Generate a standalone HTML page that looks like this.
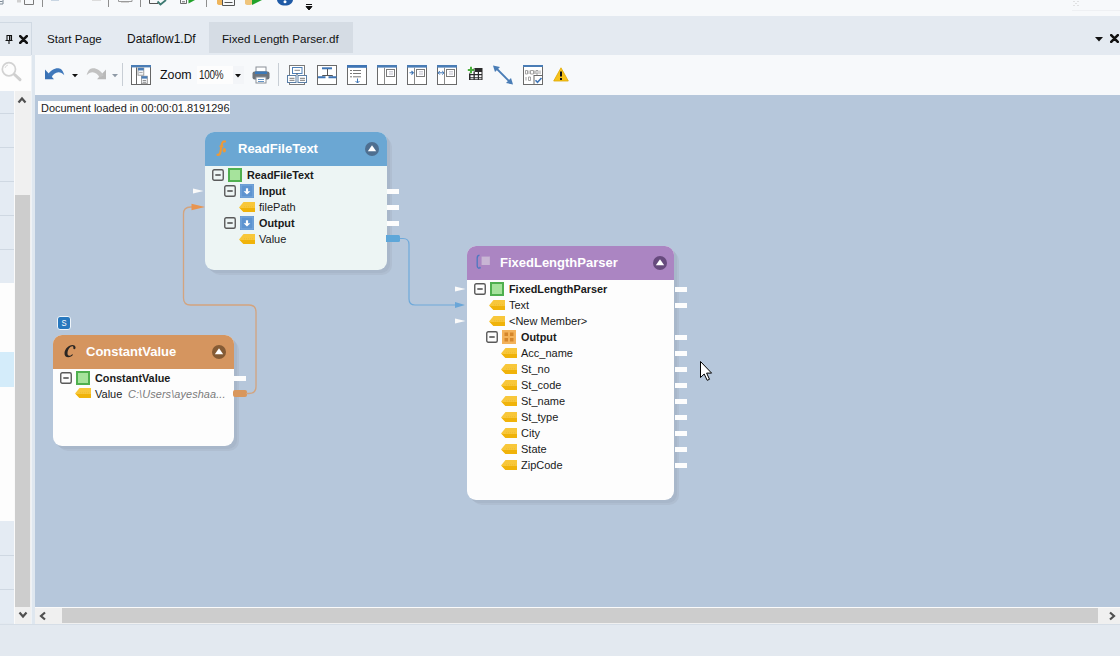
<!DOCTYPE html>
<html><head><meta charset="utf-8">
<style>
*{box-sizing:border-box;margin:0;padding:0}
html,body{width:1120px;height:656px;overflow:hidden}
body{position:relative;background:#e3e9f0;font-family:"Liberation Sans",sans-serif;color:#1e1e1e}
.a{position:absolute}
#top{left:0;top:0;width:1120px;height:16px;background:#f7f9fb}
#tabs{left:0;top:16px;width:1120px;height:39px;background:#e4eaf1}
#lphdr{left:0;top:22px;width:32px;height:33px;border-right:1px solid #d0d9e3;border-top:1px solid #d0d9e3;background:#e4eaf1}
.tab{top:22px;height:31px;font-size:11.6px;line-height:31px;color:#111;white-space:nowrap}
#search{left:0;top:56px;width:31px;height:35px;background:#fdfdfd}
#rows{left:0;top:91px;width:14px;height:532px;background:#e4ebf3}
#vsb{left:14px;top:91px;width:17px;height:533px;background:#f0f0f0;border-left:1px solid #fafafa}
#strip{left:31px;top:55px;width:4px;height:569px;background:#dfe7ef;border-left:1px solid #eef2f6}
#tb{left:35px;top:55px;width:1085px;height:40px;background:#f7f9fb}
#canvas{left:35px;top:95px;width:1085px;height:512px;background:#b6c7db;overflow:hidden}
#hsb{left:35px;top:607px;width:1085px;height:17px;background:#f0f0f0;border-top:1px solid #fafafa}
.sep{width:1px;background:#c5ccd4}
.node{position:absolute;border-radius:9px;overflow:visible}
.shadow{position:absolute;border-radius:9px;background:#a6b5c8}
.nhdr{position:absolute;left:0;top:0;right:0;border-radius:9px 9px 0 0;color:#fff;font-weight:bold;font-size:13px}
.nbody{position:absolute;left:0;right:0;bottom:0;border-radius:0 0 9px 9px}
.row{position:absolute;font-size:11px;height:16px;line-height:16px;white-space:nowrap;color:#1a1a1a}
.b{font-weight:bold;font-size:10.85px}
.minus{position:absolute;width:11px;height:11px;border:1px solid #555;background:#fff}
.minus:after{content:"";position:absolute;left:2px;top:4px;width:5px;height:1px;background:#333}
.gsq{position:absolute;width:13px;height:13px;background:#4aae4a;border:1px solid #3a9a3a}
.gsq:after{content:"";position:absolute;left:1px;top:1px;width:9px;height:9px;background:#a8e0a0}
.port{position:absolute;width:12px;height:5px;background:#fff}
.tri{position:absolute;width:0;height:0;border-top:3px solid transparent;border-bottom:3px solid transparent;border-left:10px solid #fff}
.circ{position:absolute;width:14px;height:14px;border-radius:50%}
.circ:after{content:"";position:absolute;left:2.5px;top:3px;border-left:4.5px solid transparent;border-right:4.5px solid transparent;border-bottom:7px solid #fff}
</style></head><body>

<!-- top strip -->
<div id="top" class="a"></div>
<svg class="a" style="left:0;top:0" width="320" height="16" viewBox="0 0 320 16">
<path d="M42.5 0V7M108.5 0V7M140.5 0V7M206.5 0V7" stroke="#8e8e8e" stroke-width="1"/>
<path d="M0 1.5H2.5M0 4H3V0" fill="none" stroke="#7d8a96" stroke-width="1"/>
<rect x="17" y="0" width="4" height="2.5" fill="#d0d0d0"/>
<path d="M24.5 0V4.5H33.5V0" fill="none" stroke="#7a7a7a" stroke-width="1"/>
<rect x="51" y="0" width="8" height="1" fill="#c9d6e3"/>
<rect x="92" y="0" width="9" height="1" fill="#dcdcdc"/>
<path d="M118.5 0V1.5H132V0" fill="none" stroke="#9a9a9a" stroke-width="1"/><rect x="121" y="2" width="8" height="1" fill="#d5d5d5"/>
<path d="M149.5 0V3.5H158" fill="none" stroke="#555" stroke-width="1"/>
<path d="M157.5 1.5L160.5 4.5 166 0" fill="none" stroke="#3d7a72" stroke-width="1.8"/>
<path d="M180.5 0V3.5H186.5V0M182 1.8H185" fill="none" stroke="#6a6a6a" stroke-width="1"/>
<path d="M188.5 0H195L188.5 3.5z" fill="#22a22a"/>
<path d="M217 0H223V3.5C223 4.5 222 5 220 5 218 5 217 4.3 217 3.5z" fill="#efb55c"/>
<path d="M222.5 0V5.5H234.5V0M224.5 2.5H232.5" fill="none" stroke="#555" stroke-width="1"/>
<path d="M245 0H252V3.5C252 4.5 251 5 248.5 5 246 5 245 4.3 245 3.5z" fill="#f0c57c"/>
<path d="M252 0H262L252 5z" fill="#22a22a"/>
<path d="M277 0H293C292.5 3.5 289.5 5.5 285 5.5 280.5 5.5 277.5 3.5 277 0z" fill="#1f5aa6"/>
<circle cx="285" cy="1.8" r="1.5" fill="#fff"/>
<path d="M306 4.5H312M306 6.5H312L309 10z" fill="#111" stroke="#111" stroke-width="1"/>
</svg>
<!-- tabs -->
<div id="tabs" class="a"></div>
<div id="lphdr" class="a"></div>
<svg class="a" style="left:5px;top:35px" width="8" height="9" viewBox="0 0 8 9"><path d="M2 0.5h4.5v5H2zM0.5 5.5h7M4 5.5v3.5" fill="none" stroke="#111" stroke-width="1.1"/><rect x="4" y="0.5" width="1.4" height="5" fill="#111"/></svg>
<svg class="a" style="left:19px;top:35px" width="9" height="9" viewBox="0 0 9 9"><path d="M1.2 1.2L7.8 7.8M7.8 1.2L1.2 7.8" stroke="#111" stroke-width="2.6" stroke-linecap="round"/></svg>
<div class="a tab" style="left:47px;top:23px">Start Page</div>
<div class="a tab" style="left:127px;top:25px;height:29px;line-height:29px;font-size:12px">Dataflow1.Df</div>
<div class="a" style="left:209px;top:22px;width:144px;height:31px;background:#d5dce4"></div><div class="a tab" style="left:222px;top:23px">Fixed Length Parser.df</div>
<svg class="a" style="left:1095px;top:37px" width="9" height="5" viewBox="0 0 9 5"><path d="M0 0h8L4 4.5z" fill="#111"/></svg>
<svg class="a" style="left:1110px;top:34px" width="9" height="9" viewBox="0 0 9 9"><path d="M1.2 1.2L7.8 7.8M7.8 1.2L1.2 7.8" stroke="#111" stroke-width="2.6" stroke-linecap="round"/></svg>
<svg class="a" style="left:1072px;top:0" width="48" height="12" viewBox="0 0 48 12"><path d="M1.5 1.5h1M5.5 1.5h1M3.5 3.5h1M1.5 5.5h1M5.5 5.5h1" stroke="#c8c8c8" stroke-width="1"/><path d="M0 10.5H48" stroke="#eef0f3" stroke-width="1"/></svg>

<!-- left panel -->
<div id="search" class="a"></div>
<svg class="a" style="left:0;top:60px" width="24" height="24" viewBox="0 0 24 24"><circle cx="8.9" cy="9.2" r="6.6" fill="none" stroke="#d2d2d2" stroke-width="1.7"/><path d="M5 8a4 4 0 0 1 3-3" fill="none" stroke="#dcdcdc" stroke-width="1"/><path d="M14.5 14.5l5.5 5.2" stroke="#cfcfcf" stroke-width="3" stroke-linecap="round"/></svg>
<div id="rows" class="a"></div>
<div class="a" style="left:0;top:113px;width:14px;height:1px;background:#cfd8e2"></div>
<div class="a" style="left:0;top:147px;width:14px;height:1px;background:#cfd8e2"></div>
<div class="a" style="left:0;top:181px;width:14px;height:1px;background:#cfd8e2"></div>
<div class="a" style="left:0;top:215px;width:14px;height:1px;background:#cfd8e2"></div>
<div class="a" style="left:0;top:249px;width:14px;height:1px;background:#cfd8e2"></div>
<div class="a" style="left:0;top:283px;width:14px;height:69px;background:#fdfdfd"></div>
<div class="a" style="left:0;top:352px;width:14px;height:35px;background:#d4ecfa"></div>
<div class="a" style="left:0;top:387px;width:14px;height:134px;background:#fdfdfd"></div>
<div class="a" style="left:0;top:555px;width:14px;height:1px;background:#cfd8e2"></div>
<div class="a" style="left:0;top:589px;width:14px;height:1px;background:#cfd8e2"></div>
<div id="vsb" class="a"></div>
<div class="a" style="left:15px;top:195px;width:15px;height:412px;background:#cdcdcd"></div>
<svg class="a" style="left:17px;top:96px" width="10" height="8" viewBox="0 0 10 8"><path d="M1.5 6.5L5 2.5L8.5 6.5" fill="none" stroke="#505050" stroke-width="2.2"/></svg>
<svg class="a" style="left:18px;top:611px" width="10" height="8" viewBox="0 0 10 8"><path d="M1.5 1.5L5 5.5L8.5 1.5" fill="none" stroke="#505050" stroke-width="2.2"/></svg>
<div id="strip" class="a"></div>

<!-- toolbar -->
<div id="tb" class="a"></div>
<!-- undo -->
<svg class="a" style="left:44px;top:66px" width="22" height="15" viewBox="0 0 22 15"><path d="M1 3.5V13.3H10z" fill="#3a72b5"/><path d="M3.2 9.5C6.5 4 11 1.8 14.5 2.2 17 2.5 19.2 4.5 20.3 9.2 18.6 7.3 16.5 6.3 14.5 6.3 11.5 6.3 9 8.5 7.5 11.5z" fill="#3f78bb"/></svg>
<svg class="a" style="left:72px;top:74px" width="6" height="4" viewBox="0 0 6 4"><path d="M0 0h6L3 3.2z" fill="#111"/></svg>
<svg class="a" style="left:85px;top:66px" width="22" height="15" viewBox="0 0 22 15"><path d="M21 3.5V13.3H12z" fill="#b9b9b9"/><path d="M18.8 9.5C15.5 4 11 1.8 7.5 2.2 5 2.5 2.8 4.5 1.7 9.2 3.4 7.3 5.5 6.3 7.5 6.3 10.5 6.3 13 8.5 14.5 11.5z" fill="#c2c2c2"/></svg>
<svg class="a" style="left:112px;top:74px" width="6" height="4" viewBox="0 0 6 4"><path d="M0 0h6L3 3.2z" fill="#8f9aa6"/></svg>
<div class="a sep" style="left:122px;top:63px;height:23px;background:#c8ced5"></div>
<!-- layout icon -->
<svg class="a" style="left:131px;top:65px" width="20" height="20" viewBox="0 0 20 20"><rect x="0.5" y="0.5" width="19" height="19" fill="#fff" stroke="#666"/><rect x="0" y="0" width="20" height="2.4" fill="#4a7db6"/><path d="M5.5 2.4V19.5" stroke="#666"/><rect x="7" y="3" width="5.8" height="7.2" fill="#f4f6f8" stroke="#8a8a8a" stroke-width="0.8"/><rect x="7" y="3" width="5.8" height="2.4" fill="#4a7db6"/><path d="M8.2 7.5h3.4" stroke="#999" stroke-width="0.8"/><rect x="10.5" y="11.2" width="5.8" height="7.5" fill="#f4f6f8" stroke="#8a8a8a" stroke-width="0.8"/><rect x="10.5" y="11.2" width="5.8" height="2.4" fill="#4a7db6"/><path d="M11.7 15.5h3.4M11.7 17.3h3.4" stroke="#777" stroke-width="0.8"/></svg>
<div class="a" style="left:160px;top:65px;font-size:12.4px;line-height:20px;color:#111">Zoom</div>
<div class="a" style="left:197px;top:66px;width:47px;height:18px;background:#fdfdfd"></div>
<div class="a" style="left:233px;top:66px;width:11px;height:18px;background:#f3f5f8"></div>
<div class="a" style="left:199px;top:65px;font-size:12.4px;line-height:20px;color:#222;letter-spacing:-0.3px;transform:scaleX(0.8);transform-origin:0 0">100%</div>
<svg class="a" style="left:235px;top:74px" width="6" height="4" viewBox="0 0 6 4"><path d="M0 0h6L3 3.5z" fill="#111"/></svg>
<!-- print -->
<svg class="a" style="left:252px;top:66px" width="18" height="18" viewBox="0 0 18 18"><rect x="4" y="1" width="10" height="5" fill="#fff" stroke="#8a9098"/><rect x="0.5" y="5.5" width="17" height="8" rx="2" fill="#6d737a"/><rect x="3" y="5.5" width="12" height="2.5" fill="#3b78b8"/><rect x="4" y="11" width="10" height="6" fill="#fff" stroke="#8a9098"/><path d="M6 13.5h6M6 15.5h6" stroke="#3b78b8" stroke-width="0.8"/></svg>
<div class="a sep" style="left:278px;top:63px;height:23px;background:#c8ced5"></div>
<!-- icon 1 -->
<svg class="a" style="left:286px;top:65px" width="22" height="20" viewBox="0 0 22 20"><rect x="3.5" y="0.5" width="15" height="19" fill="#fff" stroke="#7a7a7a"/><rect x="6.5" y="2.5" width="9.5" height="6" fill="#fff" stroke="#4f80b8"/><path d="M8.5 5.3h5.5" stroke="#888" stroke-width="1"/><path d="M11 8.5v1.5" stroke="#444"/><rect x="1.5" y="10.5" width="8.5" height="7" fill="#fff" stroke="#5a7ea6"/><rect x="12" y="10.5" width="8.5" height="7" fill="#fff" stroke="#5a7ea6"/><path d="M3.5 13.3h5M3.5 15.3h5M14 13.3h5M14 15.3h5" stroke="#777" stroke-width="1"/></svg>
<!-- icon 2 -->
<svg class="a" style="left:317px;top:65px" width="20" height="20" viewBox="0 0 20 20"><rect x="0.5" y="0.5" width="19" height="19" fill="#fff" stroke="#6a6a6a"/><path d="M5 3.3h10" stroke="#3f75b5" stroke-width="2"/><path d="M10.5 4v6.5M5.5 10.5h10M5.5 10.5v1M15.5 10.5v1" stroke="#555" stroke-width="1"/><path d="M1 12.2h7.5M11.5 12.2h8" stroke="#3f75b5" stroke-width="2"/></svg>
<!-- icon 3 -->
<svg class="a" style="left:347px;top:65px" width="20" height="20" viewBox="0 0 20 20"><rect x="0.5" y="0.5" width="19" height="19" fill="#fff" stroke="#6a6a6a"/><rect x="0" y="0" width="20" height="2.8" fill="#3f75b5"/><path d="M3 5.5h2M6 5.5h8M3 8.5h2M6 8.5h8M3 11.8h2M6 11.8h8" stroke="#777" stroke-width="1"/><path d="M10.5 13.5v4.5M8.5 16l2 2 2-2" stroke="#3f75b5" stroke-width="1" fill="none"/></svg>
<!-- icon 4 -->
<svg class="a" style="left:377px;top:65px" width="20" height="20" viewBox="0 0 20 20"><rect x="0.5" y="0.5" width="19" height="19" fill="#fff" stroke="#6a6a6a"/><rect x="0" y="0" width="20" height="2.6" fill="#4a7db6"/><path d="M7.5 2.6V19.5" stroke="#8a8a8a" stroke-width="1"/><rect x="9.5" y="4.5" width="8" height="7" fill="#fff" stroke="#7a7a7a" stroke-width="1"/><path d="M12 6.8h4M12 9h4" stroke="#aab" stroke-width="0.8"/></svg>
<!-- icon 5 -->
<svg class="a" style="left:407px;top:65px" width="20" height="20" viewBox="0 0 20 20"><rect x="0.5" y="0.5" width="19" height="19" fill="#fff" stroke="#6a6a6a"/><rect x="0" y="0" width="20" height="2.6" fill="#4a7db6"/><path d="M7.5 2.6V19.5" stroke="#8a8a8a" stroke-width="1"/><rect x="9.5" y="4.5" width="8" height="7" fill="#fff" stroke="#7a7a7a" stroke-width="1"/><path d="M12 6.8h4M12 9h4" stroke="#aab" stroke-width="0.8"/><path d="M2.5 7.8h3.5M4.5 6l1.8 1.8-1.8 1.8" stroke="#3f75b5" stroke-width="1.1" fill="none"/></svg>
<!-- icon 6 -->
<svg class="a" style="left:437px;top:65px" width="20" height="20" viewBox="0 0 20 20"><rect x="0.5" y="0.5" width="19" height="19" fill="#fff" stroke="#6a6a6a"/><rect x="0" y="0" width="20" height="2.6" fill="#4a7db6"/><path d="M7.5 2.6V19.5" stroke="#8a8a8a" stroke-width="1"/><rect x="9.5" y="4.5" width="8" height="7" fill="#fff" stroke="#7a7a7a" stroke-width="1"/><path d="M12 6.8h4M12 9h4" stroke="#aab" stroke-width="0.8"/><path d="M1 7.8h6M2.8 6L1 7.8l1.8 1.8M5.2 6l1.8 1.8-1.8 1.8" stroke="#3f75b5" stroke-width="1" fill="none"/></svg>
<!-- table plus -->
<svg class="a" style="left:467px;top:66px" width="16" height="15" viewBox="0 0 16 15"><rect x="2" y="2" width="13.5" height="12" fill="#2b2b2b"/><path d="M3.5 6h3v2h-3zM7.8 6h3v2h-3zM12 6h2.5v2H12zM3.5 9.3h3v2h-3zM7.8 9.3h3v2h-3zM12 9.3h2.5v2H12zM3.5 12.2h3v1h-3zM7.8 12.2h3v1h-3zM12 12.2h2.5v1H12z" fill="#fff"/><path d="M4 0.5v7M0.5 4h7" stroke="#fff" stroke-width="3.6"/><path d="M4 0.8v6.4M0.8 4h6.4" stroke="#4caf3e" stroke-width="2"/></svg>
<!-- line -->
<svg class="a" style="left:492px;top:64px" width="22" height="22" viewBox="0 0 22 22"><path d="M3.5 3.5L18.5 18.5" stroke="#4a7db6" stroke-width="1.8"/><path d="M1 1.5l7 1.5-5 5z" fill="#4a7db6"/><path d="M21 20.5l-7-1.5 5-5z" fill="#4a7db6"/></svg>
<!-- grid check -->
<svg class="a" style="left:523px;top:65px" width="20" height="20" viewBox="0 0 20 20"><rect x="0.5" y="0.5" width="19" height="19" fill="#fff" stroke="#6a6a6a"/><rect x="0" y="0" width="20" height="2" fill="#4a7db6"/><path d="M2.5 5.5h2v3.5h-2zM7.5 5.5h3v3.5h-3zM13 5.5h2v3.5h-2z" fill="none" stroke="#999" stroke-width="0.9"/><path d="M6 5.5v3.5M11.8 5.5v3.5M17 5.5v3.5M3 12v3.5M5.5 12h2v3.5h-2z" fill="none" stroke="#999" stroke-width="0.9"/><rect x="11" y="10.5" width="8.5" height="9" fill="#fff" stroke="#6a6a6a"/><path d="M12.5 15.3l2 2 4-4.3" stroke="#3f75b5" stroke-width="1.6" fill="none"/></svg>
<!-- warning -->
<svg class="a" style="left:553px;top:67px" width="16" height="15" viewBox="0 0 16 15"><path d="M8 0.8L15.3 14H0.7z" fill="#f6c21c" stroke="#e0a800" stroke-width="0.8" stroke-linejoin="round"/><path d="M8 4.5v5" stroke="#111" stroke-width="2"/><rect x="7" y="11" width="2" height="2" fill="#111"/></svg>

<!-- canvas -->
<div id="canvas" class="a"></div>
<div class="a" style="left:38px;top:101px;width:192px;height:13px;background:#fdfdfd"></div>
<div class="a" style="left:41px;top:102px;font-size:10.95px;line-height:13px;color:#1a1a1a;white-space:nowrap">Document loaded in 00:00:01.8191296</div>
<!--NODES-->
<div class="a" style="left:210px;top:137px;width:182px;height:138px;border-radius:10px;background:#afbed1"></div>
<div class="a" style="left:208px;top:135px;width:182px;height:138px;border-radius:9px;background:#a8b7ca"></div>
<div class="a" style="left:205px;top:132px;width:182px;height:138px;border-radius:9px;background:#edf5f4;overflow:hidden"><div style="height:34px;background:#6ba7d3"></div></div>
<div class="a" style="left:238px;top:132px;height:34px;line-height:34px;font-size:13px;font-weight:bold;color:#fff;white-space:nowrap">ReadFileText</div>
<svg class="a" style="left:215px;top:139px" width="13" height="18" viewBox="0 0 13 18"><path d="M10 2.5C8.5 2 7.5 3 7 4.5L5.3 13.5C5 15 4 16 2.5 15.8" stroke="#ec9a3a" stroke-width="2.2" fill="none" stroke-linecap="round"/><path d="M4.5 7.3h4" stroke="#ec9a3a" stroke-width="1.8"/><ellipse cx="9.3" cy="11.3" rx="1.6" ry="2.3" fill="#ec9a3a"/></svg>
<svg class="a" style="left:365px;top:142px" width="14" height="14" viewBox="0 0 14 14"><circle cx="7" cy="7" r="7" fill="#4e6f90"/><path d="M2.8 9.3h8.4L7 3.3z" fill="#fff"/></svg>
<svg class="a" style="left:212px;top:169px" width="12" height="12" viewBox="0 0 12 12"><rect x="0.75" y="0.75" width="10.5" height="10.5" rx="1.5" fill="none" stroke="#5a5a5a" stroke-width="1.4"/><path d="M3.3 6h5.4" stroke="#3a3a3a" stroke-width="1.4"/></svg>
<svg class="a" style="left:228px;top:168px" width="14" height="14" viewBox="0 0 14 14"><rect x="0" y="0" width="14" height="14" fill="#4fb04f"/><rect x="2" y="2" width="10" height="10" fill="#a6e39c"/></svg>
<div class="a row b" style="left:247px;top:167px;">ReadFileText</div>
<svg class="a" style="left:224px;top:185px" width="12" height="12" viewBox="0 0 12 12"><rect x="0.75" y="0.75" width="10.5" height="10.5" rx="1.5" fill="none" stroke="#5a5a5a" stroke-width="1.4"/><path d="M3.3 6h5.4" stroke="#3a3a3a" stroke-width="1.4"/></svg>
<svg class="a" style="left:240px;top:184px" width="14" height="14" viewBox="0 0 14 14"><rect x="0" y="0" width="14" height="14" fill="#5d94d0"/><rect x="1" y="1" width="12" height="12" fill="none" stroke="#84b0de" stroke-width="0.8"/><path d="M7 4.3v3.5" stroke="#fff" stroke-width="2.2"/><path d="M3.6 7.2h6.8L7 10.6z" fill="#fff"/></svg>
<div class="a row b" style="left:259px;top:183px;">Input</div>
<svg class="a" style="left:239px;top:202px" width="16" height="10" viewBox="0 0 16 10"><path d="M4.5 0H16V10H4.5L0 5.5z" fill="#f8c73a"/><path d="M0.8 6H16V10H4.5z" fill="#f0b30a"/><path d="M5 4.8h10" stroke="#eab52a" stroke-width="0.6" stroke-dasharray="1 1"/></svg>
<div class="a row" style="left:259px;top:199px;">filePath</div>
<svg class="a" style="left:224px;top:217px" width="12" height="12" viewBox="0 0 12 12"><rect x="0.75" y="0.75" width="10.5" height="10.5" rx="1.5" fill="none" stroke="#5a5a5a" stroke-width="1.4"/><path d="M3.3 6h5.4" stroke="#3a3a3a" stroke-width="1.4"/></svg>
<svg class="a" style="left:240px;top:216px" width="14" height="14" viewBox="0 0 14 14"><rect x="0" y="0" width="14" height="14" fill="#5d94d0"/><rect x="1" y="1" width="12" height="12" fill="none" stroke="#84b0de" stroke-width="0.8"/><path d="M7 4.3v3.5" stroke="#fff" stroke-width="2.2"/><path d="M3.6 7.2h6.8L7 10.6z" fill="#fff"/></svg>
<div class="a row b" style="left:259px;top:215px;">Output</div>
<svg class="a" style="left:239px;top:234px" width="16" height="10" viewBox="0 0 16 10"><path d="M4.5 0H16V10H4.5L0 5.5z" fill="#f8c73a"/><path d="M0.8 6H16V10H4.5z" fill="#f0b30a"/><path d="M5 4.8h10" stroke="#eab52a" stroke-width="0.6" stroke-dasharray="1 1"/></svg>
<div class="a row" style="left:259px;top:231px;">Value</div>
<div class="a" style="left:387px;top:188.5px;width:12px;height:5px;background:#fdfdfd"></div>
<div class="a" style="left:387px;top:204.5px;width:12px;height:5px;background:#fdfdfd"></div>
<div class="a" style="left:387px;top:220.5px;width:12px;height:5px;background:#fdfdfd"></div>
<div class="a" style="left:386px;top:235px;width:14px;height:7px;background:#5ea7d9;border-radius:0 1.5px 1.5px 0"></div>
<svg class="a" style="left:193px;top:187px" width="11" height="8" viewBox="0 0 11 8"><path d="M0 1.5L10.5 4 0 6.5z" fill="#fafafa"/></svg>
<svg class="a" style="left:57px;top:316px" width="14" height="14" viewBox="0 0 14 14"><rect x="0.5" y="0.5" width="13" height="13" rx="2.5" fill="#2878be" stroke="#eef4fa" stroke-width="1"/><text x="7" y="10.3" text-anchor="middle" font-size="9" font-family="Liberation Sans" fill="#fff" transform="translate(7 0) scale(0.85 1) translate(-7 0)">S</text></svg>
<div class="a" style="left:58px;top:340px;width:181px;height:111px;border-radius:10px;background:#afbed1"></div>
<div class="a" style="left:56px;top:338px;width:181px;height:111px;border-radius:9px;background:#a8b7ca"></div>
<div class="a" style="left:53px;top:335px;width:181px;height:111px;border-radius:9px;background:#fdfdfd;overflow:hidden"><div style="height:34px;background:#d5955f"></div></div>
<div class="a" style="left:86px;top:335px;height:34px;line-height:34px;font-size:13px;font-weight:bold;color:#fff;white-space:nowrap">ConstantValue</div>
<svg class="a" style="left:63px;top:344px" width="14" height="14" viewBox="0 0 14 14"><path d="M12.5 3.2C12.3 1.8 11 1 9.5 1 5.5 1 2 4.8 1.5 8.8 1.2 11.8 3 13.3 5.3 13.3 7.3 13.3 9 12.2 10 10.8L9.3 10.3C8.5 11.2 7.5 11.8 6.5 11.8 5 11.8 4.3 10.6 4.5 8.8 4.9 5.5 7 2.3 9.2 2.3 10.2 2.3 10.5 3 10.3 3.8 10.1 4.8 10.8 5.3 11.4 5.2 12.2 5 12.7 4.2 12.5 3.2z" fill="#2b2622"/></svg>
<svg class="a" style="left:212px;top:345px" width="14" height="14" viewBox="0 0 14 14"><circle cx="7" cy="7" r="7" fill="#855b35"/><path d="M2.8 9.3h8.4L7 3.3z" fill="#fff"/></svg>
<svg class="a" style="left:60px;top:372px" width="12" height="12" viewBox="0 0 12 12"><rect x="0.75" y="0.75" width="10.5" height="10.5" rx="1.5" fill="none" stroke="#5a5a5a" stroke-width="1.4"/><path d="M3.3 6h5.4" stroke="#3a3a3a" stroke-width="1.4"/></svg>
<svg class="a" style="left:76px;top:371px" width="14" height="14" viewBox="0 0 14 14"><rect x="0" y="0" width="14" height="14" fill="#4fb04f"/><rect x="2" y="2" width="10" height="10" fill="#a6e39c"/></svg>
<div class="a row b" style="left:95px;top:370px;">ConstantValue</div>
<svg class="a" style="left:75px;top:388px" width="16" height="10" viewBox="0 0 16 10"><path d="M4.5 0H16V10H4.5L0 5.5z" fill="#f8c73a"/><path d="M0.8 6H16V10H4.5z" fill="#f0b30a"/><path d="M5 4.8h10" stroke="#eab52a" stroke-width="0.6" stroke-dasharray="1 1"/></svg>
<div class="a row" style="left:95px;top:386px;">Value</div>
<div class="a row" style="left:128px;top:386px;font-style:italic;color:#7a7a7a;font-size:10.9px;letter-spacing:0.1px">C:\Users\ayeshaa...</div>
<div class="a" style="left:234px;top:375.5px;width:12px;height:5px;background:#fdfdfd"></div>
<div class="a" style="left:233px;top:390px;width:14px;height:7px;background:#d9975c;border-radius:2px"></div>
<div class="a" style="left:472px;top:251px;width:207px;height:254px;border-radius:10px;background:#afbed1"></div>
<div class="a" style="left:470px;top:249px;width:207px;height:254px;border-radius:9px;background:#a8b7ca"></div>
<div class="a" style="left:467px;top:246px;width:207px;height:254px;border-radius:9px;background:#fdfdfd;overflow:hidden"><div style="height:34px;background:#ab85c2"></div></div>
<div class="a" style="left:500px;top:246px;height:34px;line-height:34px;font-size:13px;font-weight:bold;color:#fff;white-space:nowrap">FixedLengthParser</div>
<svg class="a" style="left:475px;top:254px" width="17" height="16" viewBox="0 0 17 16"><path d="M4.5 1.2C3 1.4 2.2 2.5 2.2 4V11.5C2.2 13.3 3.2 14.5 4.6 14.3" stroke="#4d78c0" stroke-width="1.3" fill="none"/><path d="M4.5 12.8l1 1.5" stroke="#4d78c0" stroke-width="1.2"/><rect x="6.5" y="2.5" width="8.5" height="8.5" fill="#c3aed0"/><path d="M7.5 4h6.5M7.5 6h6.5M7.5 8h6.5M7.5 10h6.5" stroke="#ddd0e4" stroke-width="0.8" stroke-dasharray="1 1"/></svg>
<svg class="a" style="left:653px;top:256px" width="14" height="14" viewBox="0 0 14 14"><circle cx="7" cy="7" r="7" fill="#674a7d"/><path d="M2.8 9.3h8.4L7 3.3z" fill="#fff"/></svg>
<svg class="a" style="left:474px;top:283px" width="12" height="12" viewBox="0 0 12 12"><rect x="0.75" y="0.75" width="10.5" height="10.5" rx="1.5" fill="none" stroke="#5a5a5a" stroke-width="1.4"/><path d="M3.3 6h5.4" stroke="#3a3a3a" stroke-width="1.4"/></svg>
<svg class="a" style="left:490px;top:282px" width="14" height="14" viewBox="0 0 14 14"><rect x="0" y="0" width="14" height="14" fill="#4fb04f"/><rect x="2" y="2" width="10" height="10" fill="#a6e39c"/></svg>
<div class="a row b" style="left:509px;top:281px;">FixedLengthParser</div>
<svg class="a" style="left:489px;top:300px" width="16" height="10" viewBox="0 0 16 10"><path d="M4.5 0H16V10H4.5L0 5.5z" fill="#f8c73a"/><path d="M0.8 6H16V10H4.5z" fill="#f0b30a"/><path d="M5 4.8h10" stroke="#eab52a" stroke-width="0.6" stroke-dasharray="1 1"/></svg>
<div class="a row" style="left:509px;top:297px;">Text</div>
<svg class="a" style="left:489px;top:316px" width="16" height="10" viewBox="0 0 16 10"><path d="M4.5 0H16V10H4.5L0 5.5z" fill="#f8c73a"/><path d="M0.8 6H16V10H4.5z" fill="#f0b30a"/><path d="M5 4.8h10" stroke="#eab52a" stroke-width="0.6" stroke-dasharray="1 1"/></svg>
<div class="a row" style="left:509px;top:313px;">&lt;New Member&gt;</div>
<svg class="a" style="left:486px;top:331px" width="12" height="12" viewBox="0 0 12 12"><rect x="0.75" y="0.75" width="10.5" height="10.5" rx="1.5" fill="none" stroke="#5a5a5a" stroke-width="1.4"/><path d="M3.3 6h5.4" stroke="#3a3a3a" stroke-width="1.4"/></svg>
<svg class="a" style="left:502px;top:330px" width="14" height="14" viewBox="0 0 14 14"><rect x="0" y="0" width="14" height="14" fill="#f3b25a"/><rect x="2.5" y="2.5" width="3.5" height="3.5" fill="#d5862a"/><rect x="8" y="2.5" width="3.5" height="3.5" fill="#d5862a"/><rect x="2.5" y="8" width="3.5" height="3.5" fill="#d5862a"/><rect x="8" y="8" width="3.5" height="3.5" fill="#d5862a"/></svg>
<div class="a row b" style="left:521px;top:329px;">Output</div>
<svg class="a" style="left:501px;top:348px" width="16" height="10" viewBox="0 0 16 10"><path d="M4.5 0H16V10H4.5L0 5.5z" fill="#f8c73a"/><path d="M0.8 6H16V10H4.5z" fill="#f0b30a"/><path d="M5 4.8h10" stroke="#eab52a" stroke-width="0.6" stroke-dasharray="1 1"/></svg>
<div class="a row" style="left:521px;top:345px;">Acc_name</div>
<svg class="a" style="left:501px;top:364px" width="16" height="10" viewBox="0 0 16 10"><path d="M4.5 0H16V10H4.5L0 5.5z" fill="#f8c73a"/><path d="M0.8 6H16V10H4.5z" fill="#f0b30a"/><path d="M5 4.8h10" stroke="#eab52a" stroke-width="0.6" stroke-dasharray="1 1"/></svg>
<div class="a row" style="left:521px;top:361px;">St_no</div>
<svg class="a" style="left:501px;top:380px" width="16" height="10" viewBox="0 0 16 10"><path d="M4.5 0H16V10H4.5L0 5.5z" fill="#f8c73a"/><path d="M0.8 6H16V10H4.5z" fill="#f0b30a"/><path d="M5 4.8h10" stroke="#eab52a" stroke-width="0.6" stroke-dasharray="1 1"/></svg>
<div class="a row" style="left:521px;top:377px;">St_code</div>
<svg class="a" style="left:501px;top:396px" width="16" height="10" viewBox="0 0 16 10"><path d="M4.5 0H16V10H4.5L0 5.5z" fill="#f8c73a"/><path d="M0.8 6H16V10H4.5z" fill="#f0b30a"/><path d="M5 4.8h10" stroke="#eab52a" stroke-width="0.6" stroke-dasharray="1 1"/></svg>
<div class="a row" style="left:521px;top:393px;">St_name</div>
<svg class="a" style="left:501px;top:412px" width="16" height="10" viewBox="0 0 16 10"><path d="M4.5 0H16V10H4.5L0 5.5z" fill="#f8c73a"/><path d="M0.8 6H16V10H4.5z" fill="#f0b30a"/><path d="M5 4.8h10" stroke="#eab52a" stroke-width="0.6" stroke-dasharray="1 1"/></svg>
<div class="a row" style="left:521px;top:409px;">St_type</div>
<svg class="a" style="left:501px;top:428px" width="16" height="10" viewBox="0 0 16 10"><path d="M4.5 0H16V10H4.5L0 5.5z" fill="#f8c73a"/><path d="M0.8 6H16V10H4.5z" fill="#f0b30a"/><path d="M5 4.8h10" stroke="#eab52a" stroke-width="0.6" stroke-dasharray="1 1"/></svg>
<div class="a row" style="left:521px;top:425px;">City</div>
<svg class="a" style="left:501px;top:444px" width="16" height="10" viewBox="0 0 16 10"><path d="M4.5 0H16V10H4.5L0 5.5z" fill="#f8c73a"/><path d="M0.8 6H16V10H4.5z" fill="#f0b30a"/><path d="M5 4.8h10" stroke="#eab52a" stroke-width="0.6" stroke-dasharray="1 1"/></svg>
<div class="a row" style="left:521px;top:441px;">State</div>
<svg class="a" style="left:501px;top:460px" width="16" height="10" viewBox="0 0 16 10"><path d="M4.5 0H16V10H4.5L0 5.5z" fill="#f8c73a"/><path d="M0.8 6H16V10H4.5z" fill="#f0b30a"/><path d="M5 4.8h10" stroke="#eab52a" stroke-width="0.6" stroke-dasharray="1 1"/></svg>
<div class="a row" style="left:521px;top:457px;">ZipCode</div>
<div class="a" style="left:675px;top:286.5px;width:12px;height:5px;background:#fdfdfd"></div>
<div class="a" style="left:675px;top:302.5px;width:12px;height:5px;background:#fdfdfd"></div>
<div class="a" style="left:675px;top:334.5px;width:12px;height:5px;background:#fdfdfd"></div>
<div class="a" style="left:675px;top:350.5px;width:12px;height:5px;background:#fdfdfd"></div>
<div class="a" style="left:675px;top:366.5px;width:12px;height:5px;background:#fdfdfd"></div>
<div class="a" style="left:675px;top:382.5px;width:12px;height:5px;background:#fdfdfd"></div>
<div class="a" style="left:675px;top:398.5px;width:12px;height:5px;background:#fdfdfd"></div>
<div class="a" style="left:675px;top:414.5px;width:12px;height:5px;background:#fdfdfd"></div>
<div class="a" style="left:675px;top:430.5px;width:12px;height:5px;background:#fdfdfd"></div>
<div class="a" style="left:675px;top:446.5px;width:12px;height:5px;background:#fdfdfd"></div>
<div class="a" style="left:675px;top:462.5px;width:12px;height:5px;background:#fdfdfd"></div>
<svg class="a" style="left:455px;top:285px" width="11" height="8" viewBox="0 0 11 8"><path d="M0 1.5L10.5 4 0 6.5z" fill="#fafafa"/></svg>
<svg class="a" style="left:455px;top:317px" width="11" height="8" viewBox="0 0 11 8"><path d="M0 1.5L10.5 4 0 6.5z" fill="#fafafa"/></svg>
<svg class="a" style="left:0;top:0" width="1120" height="656" viewBox="0 0 1120 656"><path d="M246 393.5H249Q256 393.5 256 386.5V312Q256 305 249 305H190.5Q183.5 305 183.5 298V214Q183.5 207 190.5 207H193" fill="none" stroke="#d3a47f" stroke-width="1.3"/><path d="M191.5 203.8L205 207 191.5 210.3z" fill="#e8944f"/><path d="M400 238.5H403Q409 238.5 409 244.5V299Q409 305 415 305H456" fill="none" stroke="#6ea9da" stroke-width="1.2"/><path d="M455 302L465 305 455 308z" fill="#6aa6d8"/></svg>
<svg class="a" style="left:699px;top:360px" width="14" height="22" viewBox="0 0 14 22"><path d="M1.5 1.5V17.5L5.2 14L8.2 20.3L10.5 19.3L7.6 13.1H12.6z" fill="#fff" stroke="#000" stroke-width="1" stroke-linejoin="miter"/></svg>
<!--/NODES-->

<!-- h scrollbar -->
<div id="hsb" class="a"></div>
<div class="a" style="left:0;top:624px;width:1120px;height:1px;background:#d6dee7"></div>
<div class="a" style="left:62px;top:608px;width:1036px;height:15px;background:#cdcdcd"></div>
<svg class="a" style="left:39px;top:611px" width="8" height="10" viewBox="0 0 8 10"><path d="M6 1.5L2 5L6 8.5" fill="none" stroke="#505050" stroke-width="2.2"/></svg>
<svg class="a" style="left:1108px;top:611px" width="8" height="10" viewBox="0 0 8 10"><path d="M2 1.5L6 5L2 8.5" fill="none" stroke="#505050" stroke-width="2.2"/></svg>

</body></html>
